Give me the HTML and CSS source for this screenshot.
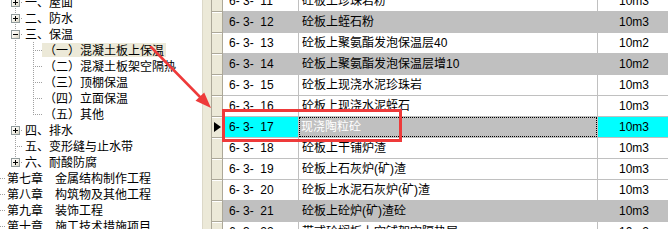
FILE: index.html
```html
<!DOCTYPE html>
<html lang="zh-CN">
<head>
<meta charset="utf-8">
<title>定额树</title>
<link rel="stylesheet" href="styles.css">
</head>
<body>
<div class="screen">
  <div class="tree">
    <div class="tree-list">
      <div class="node"><span class="ga"></span><span class="gb v h"><span class="exp plus"></span></span><span class="label">一、屋面</span></div>
      <div class="node"><span class="ga"></span><span class="gb v h"><span class="exp plus"></span></span><span class="label">二、防水</span></div>
      <div class="node"><span class="ga"></span><span class="gb v h"><span class="exp minus"></span></span><span class="label">三、保温</span></div>
      <div class="node"><span class="ga"></span><span class="gb v"></span><span class="gc v h"></span><span class="label selected">（一）混凝土板上保温</span></div>
      <div class="node"><span class="ga"></span><span class="gb v"></span><span class="gc v h"></span><span class="label">（二）混凝土板架空隔热</span></div>
      <div class="node"><span class="ga"></span><span class="gb v"></span><span class="gc v h"></span><span class="label">（三）顶棚保温</span></div>
      <div class="node"><span class="ga"></span><span class="gb v"></span><span class="gc v h"></span><span class="label">（四）立面保温</span></div>
      <div class="node"><span class="ga"></span><span class="gb v"></span><span class="gc vt h"></span><span class="label">（五）其他</span></div>
      <div class="node"><span class="ga"></span><span class="gb v h"><span class="exp plus"></span></span><span class="label">四、排水</span></div>
      <div class="node"><span class="ga"></span><span class="gb v h"></span><span class="label">五、变形缝与止水带</span></div>
      <div class="node"><span class="ga"></span><span class="gb vt h"><span class="exp plus"></span></span><span class="label">六、耐酸防腐</span></div>
      <div class="node"><span class="ga h0"></span><span class="label">第七章　金属结构制作工程</span></div>
      <div class="node"><span class="ga h0"></span><span class="label">第八章　构筑物及其他工程</span></div>
      <div class="node"><span class="ga h0"></span><span class="label">第九章　装饰工程</span></div>
      <div class="node"><span class="ga h0"></span><span class="label">第十章　施工技术措施项目</span></div>
    </div>
  </div>
  <div class="splitter"></div>
  <div class="grid">
    <div class="grid-body">
      <div class="row"><span class="rh"></span><span class="code">6- 3-  11</span><span class="name">砼板上珍珠岩粉</span><span class="unit">10m3</span></div>
      <div class="row alt"><span class="rh"></span><span class="code">6- 3-  12</span><span class="name">砼板上蛭石粉</span><span class="unit">10m3</span></div>
      <div class="row"><span class="rh"></span><span class="code">6- 3-  13</span><span class="name">砼板上聚氨酯发泡保温层40</span><span class="unit">10m2</span></div>
      <div class="row alt"><span class="rh"></span><span class="code">6- 3-  14</span><span class="name">砼板上聚氨酯发泡保温层增10</span><span class="unit">10m2</span></div>
      <div class="row"><span class="rh"></span><span class="code">6- 3-  15</span><span class="name">砼板上现浇水泥珍珠岩</span><span class="unit">10m3</span></div>
      <div class="row"><span class="rh"></span><span class="code">6- 3-  16</span><span class="name">砼板上现浇水泥蛭石</span><span class="unit">10m3</span></div>
      <div class="row sel"><span class="rh"><span class="cur"></span></span><span class="code">6- 3-  17</span><span class="name"><span class="focus">现浇陶粒砼</span></span><span class="unit">10m3</span></div>
      <div class="row"><span class="rh"></span><span class="code">6- 3-  18</span><span class="name">砼板上干铺炉渣</span><span class="unit">10m3</span></div>
      <div class="row"><span class="rh"></span><span class="code">6- 3-  19</span><span class="name">砼板上石灰炉(矿)渣</span><span class="unit">10m3</span></div>
      <div class="row"><span class="rh"></span><span class="code">6- 3-  20</span><span class="name">砼板上水泥石灰炉(矿)渣</span><span class="unit">10m3</span></div>
      <div class="row alt"><span class="rh"></span><span class="code">6- 3-  21</span><span class="name">砼板上砼炉(矿)渣砼</span><span class="unit">10m3</span></div>
      <div class="row"><span class="rh"></span><span class="code">6- 3-  22</span><span class="name">带式砼搁板上空铺架空隔热层</span><span class="unit">10m2</span></div>
    </div>
  </div>
  <svg class="annot" width="668" height="229" viewBox="0 0 668 229" aria-hidden="true">
    <rect x="223.5" y="110.5" width="177" height="30" fill="none" stroke="#ee3a3a" stroke-width="3"/>
    <line x1="151" y1="47" x2="202" y2="99" stroke="#ee3a3a" stroke-width="2.5" stroke-linecap="round"/>
    <polygon points="211,108 195.5,100.8 204.2,92.4" fill="#ee3a3a"/>
  </svg>
</div>
</body>
</html>
```

FILE: styles.css
```css
html, body {
  margin: 0;
  padding: 0;
}

body {
  width: 668px;
  height: 229px;
  overflow: hidden;
  background: #fff;
  font-family: "Liberation Sans", "Noto Sans CJK SC", sans-serif;
  font-size: 12px;
  color: #000;
}

.screen {
  position: relative;
  display: flex;
  width: 668px;
  height: 229px;
  overflow: hidden;
}

/* ---------- tree ---------- */
.tree {
  width: 202px;
  flex: none;
  background: #fff;
  overflow: hidden;
}

.tree-list {
  margin-top: -6px;
}

.node {
  display: flex;
  align-items: center;
  height: 16px;
  white-space: nowrap;
}

.ga,
.gb,
.gc {
  position: relative;
  flex: none;
  height: 16px;
  display: flex;
  align-items: center;
}

.ga { width: 5px; }
.gb { width: 18px; }
.gc { width: 19px; }

.v::before,
.vt::before {
  content: "";
  position: absolute;
  left: 10px;
  top: 0;
  bottom: 0;
  width: 1px;
  background: repeating-linear-gradient(to bottom, #a0a0a0 0 1px, transparent 1px 2px);
}

.vt::before {
  bottom: 8px;
}

.h::after,
.h0::after {
  content: "";
  position: absolute;
  left: 10px;
  right: 0;
  top: 8px;
  height: 1px;
  background: repeating-linear-gradient(to right, #a0a0a0 0 1px, transparent 1px 2px);
}

.h0::after {
  left: 0;
}

.exp {
  position: relative;
  z-index: 1;
  width: 9px;
  height: 9px;
  margin-left: 6px;
  box-sizing: border-box;
  border: 1px solid #919b9c;
  background: linear-gradient(135deg, #ffffff 0%, #f4f2ea 50%, #d8d4c4 100%);
}

.exp::before {
  content: "";
  position: absolute;
  left: 1px;
  top: 3px;
  width: 5px;
  height: 1px;
  background: #000;
}

.plus::after {
  content: "";
  position: absolute;
  left: 3px;
  top: 1px;
  width: 1px;
  height: 5px;
  background: #000;
}

.label {
  padding: 0 2px;
  height: 14px;
  line-height: 14px;
  font-family: "Noto Sans CJK SC", sans-serif;
  font-size: 12px;
}

.label.selected {
  background: #ece9d8;
}

/* ---------- splitter ---------- */
.splitter {
  width: 9px;
  flex: none;
  box-sizing: border-box;
  border-left: 1px solid #dcd8c8;
  background: #ece9d8;
}

/* ---------- grid ---------- */
.grid {
  flex: 1;
  overflow: hidden;
}

.grid-body {
  margin-top: -9px;
}

.row {
  display: flex;
  height: 21px;
}

.row > span {
  box-sizing: border-box;
  height: 21px;
  line-height: 20px;
  white-space: pre;
  border-bottom: 1px solid #c0c0c0;
}

.row > .rh {
  width: 12px;
  flex: none;
  display: flex;
  align-items: center;
  background: #ece9d8;
  border-left: 1px solid #aca899;
  border-right: 1px solid #aca899;
  border-bottom: 1px solid #aca899;
  box-shadow: inset 0 1px #fff;
}

.code {
  width: 75px;
  flex: none;
  padding-left: 6px;
}

.name {
  width: 299px;
  flex: none;
  padding-left: 3px;
  border-left: 1px solid #c0c0c0;
}

.unit {
  flex: 1;
  padding-left: 21px;
  border-left: 1px solid #c0c0c0;
}

.row.alt .code,
.row.alt .name,
.row.alt .unit {
  background: #c0c0c0;
}

.row.sel .code,
.row.sel .unit {
  background: #00ffff;
}

.row.sel .name {
  background: #c0c0c0;
  color: #fff;
  padding-left: 0;
}

.focus {
  display: block;
  height: 20px;
  box-sizing: border-box;
  padding-left: 2px;
  line-height: 18px;
  outline: 1px dotted #000;
  outline-offset: -1px;
  padding-top: 1px;
}

.cur {
  width: 0;
  height: 0;
  margin-left: 2px;
  border-left: 7px solid #000;
  border-top: 5px solid transparent;
  border-bottom: 5px solid transparent;
}

/* ---------- annotations ---------- */
.annot {
  position: absolute;
  left: 0;
  top: 0;
  pointer-events: none;
}
```
